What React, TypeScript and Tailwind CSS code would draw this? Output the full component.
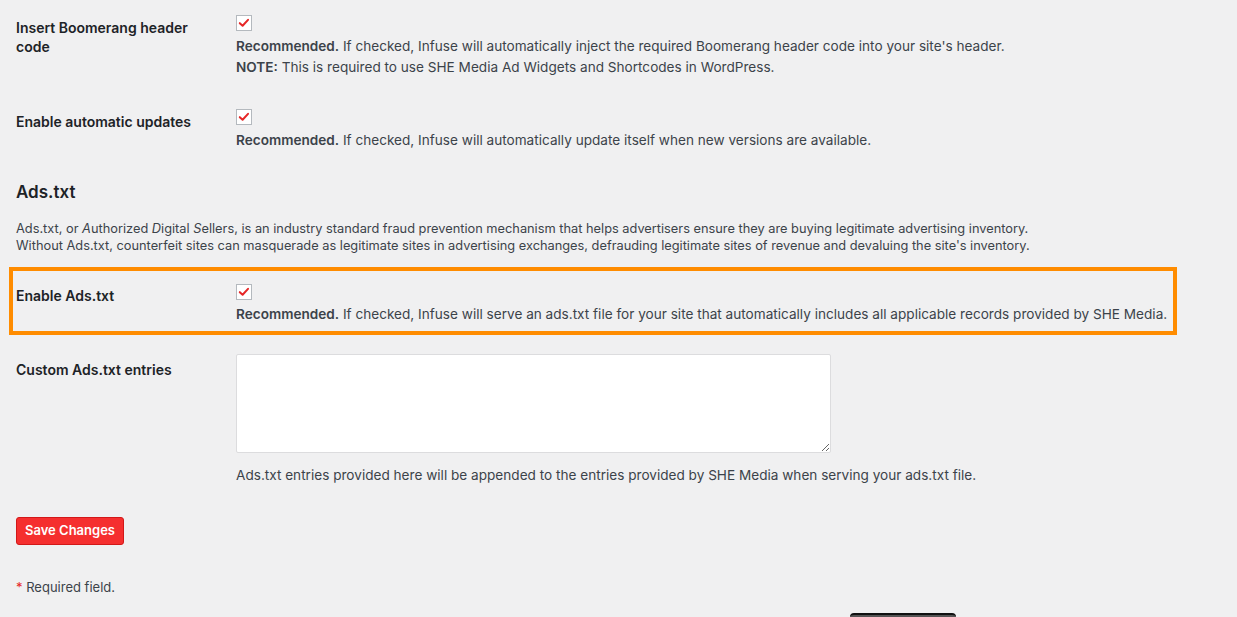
import type { ReactNode } from "react";

function Check() {
  return (
    <span className="flex h-4 w-4 items-center justify-center border border-[#b4b9be] bg-white">
      <svg viewBox="0 0 16 16" className="h-[14px] w-[14px]">
        <path d="M3.2 8.2 L6.4 11.2 L12.6 4.4" fill="none" stroke="#e62727" strokeWidth="2.3" strokeLinecap="round" strokeLinejoin="round" />
      </svg>
    </span>
  );
}

function Row({
  label,
  children,
  className = "",
  labelClass = "pt-[18px]",
}: {
  label: ReactNode;
  children: ReactNode;
  className?: string;
  labelClass?: string;
}) {
  return (
    <div className={`flex ${className}`}>
      <div className={`w-[210px] shrink-0 pb-5 pr-[10px] text-[14px] font-semibold leading-[19px] text-[#1d2327] ${labelClass}`}>
        {label}
      </div>
      <div className="flex-1 py-[15px] pl-[10px] pr-[10px]">{children}</div>
    </div>
  );
}

function Desc({ children }: { children: ReactNode }) {
  return <p className="text-[13.6px] leading-[21px] text-[#3c434a]">{children}</p>;
}

export default function App() {
  return (
    <div
      className="min-h-[617px] overflow-hidden bg-[#f0f0f1] pl-4 text-[13px] text-[#3c434a]"
      style={{ fontFamily: "Inter, 'Noto Sans', sans-serif" }}
    >
      <Row label={<>Insert Boomerang header<br />code</>}>
        <Check />
        <div className="mt-[5px]">
          <Desc>
            <b className="font-semibold">Recommended.</b> If checked, Infuse will automatically inject the required Boomerang header code into your site's header.
          </Desc>
          <Desc>
            <b className="font-semibold">NOTE:</b> This is required to use SHE Media Ad Widgets and Shortcodes in WordPress.
          </Desc>
        </div>
      </Row>

      <Row label="Enable automatic updates" className="mt-[1px]">
        <Check />
        <div className="mt-[5px]">
          <Desc>
            <b className="font-semibold">Recommended.</b> If checked, Infuse will automatically update itself when new versions are available.
          </Desc>
        </div>
      </Row>

      <h2 className="mt-[15px] text-[17px] font-semibold leading-[22px] text-[#1d2327]">Ads.txt</h2>
      <div className="mt-[17px] text-[12.8px] leading-[17px] text-[#3c434a]">
        <p>
          Ads.txt, or <em>A</em>uthorized <em>D</em>igital <em>S</em>ellers, is an industry standard fraud prevention mechanism that helps advertisers ensure they are buying legitimate advertising inventory.
        </p>
        <p>
          Without Ads.txt, counterfeit sites can masquerade as legitimate sites in advertising exchanges, defrauding legitimate sites of revenue and devaluing the site's inventory.
        </p>
      </div>

      <div className="-ml-[7px] mt-[13px] w-[1168px] border-4 border-[#ff8c00] pl-[3px]">
        <div className="flex">
          <div className="w-[210px] shrink-0 pt-[15px] pr-[10px] text-[14px] font-semibold leading-[19px] text-[#1d2327]">
            Enable Ads.txt
          </div>
          <div className="flex-1 pt-[13px] pb-[6px] pl-[10px]">
            <Check />
            <div className="mt-[4px]">
              <Desc>
                <b className="font-semibold">Recommended.</b> If checked, Infuse will serve an ads.txt file for your site that automatically includes all applicable records provided by SHE Media.
              </Desc>
            </div>
          </div>
        </div>
      </div>

      <Row label="Custom Ads.txt entries" className="mt-[4px]" labelClass="pt-[21px]">
        <textarea className="block h-[99px] w-[595px] resize-y rounded-[2px] border border-[#dcdcde] bg-white" />
        <p className="mt-[13px] text-[13.6px] leading-[19px] text-[#3c434a]">
          Ads.txt entries provided here will be appended to the entries provided by SHE Media when serving your ads.txt file.
        </p>
      </Row>

      <button className="mt-[17px] h-[28px] rounded-[3px] border border-[#d21818] bg-[#f52f2f] px-[8px] text-[13px] font-semibold text-white">
        Save Changes
      </button>

      <p className="mt-[33px] text-[13px] text-[#3c434a]">
        <span className="text-[#e62727]">*</span> Required field.
      </p>

      <div className="mt-[15px] ml-[834px] h-[20px] w-[106px] rounded-t-[4px] border-t-2 border-[#111] bg-[#555]" />
    </div>
  );
}
